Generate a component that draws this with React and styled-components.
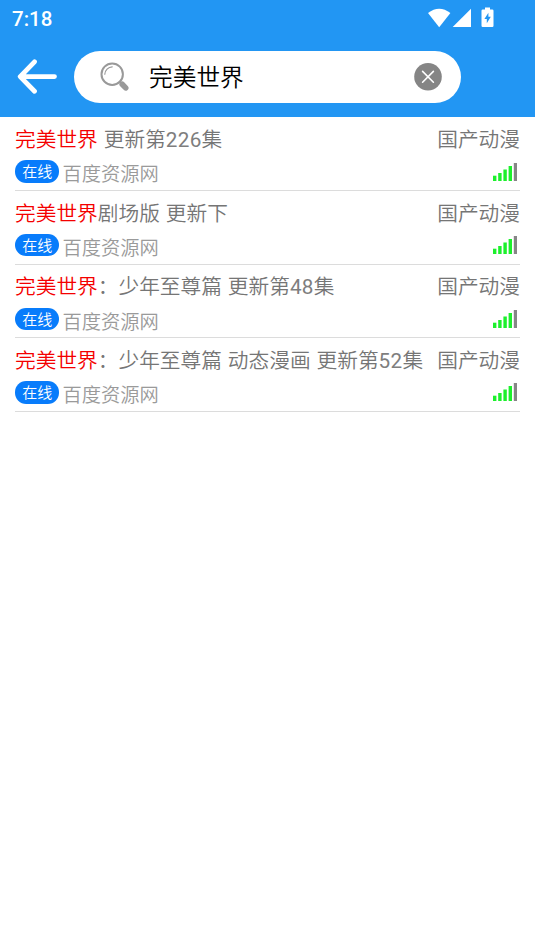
import styled, { createGlobalStyle } from 'styled-components';

const GlobalStyle = createGlobalStyle`
  * {
    box-sizing: border-box;
  }

  body {
    margin: 0;
    background-color: #ffffff;
    font-family: Roboto, 'Noto Sans CJK SC', sans-serif;
  }
`;

const Page = styled.div`
  min-height: 951px;
  background-color: #ffffff;
  overflow: hidden;
`;

// Styles for the header
const Header = styled.header`
  height: 117.4px;
  background-color: #2296f3;
`;

const StatusBar = styled.div`
  display: flex;
  justify-content: space-between;
  height: 38px;
  padding: 0 40px 0 12px;
`;

const Time = styled.span`
  font-size: 20.5px;
  font-weight: 500;
  line-height: 38px;
  color: #ffffff;
`;

const StatusIcons = styled.svg`
  display: block;
  width: 67px;
  height: 22px;
  margin-top: 7px;
`;

const SearchRow = styled.div`
  display: flex;
  align-items: center;
  height: 52px;
  margin-top: 12.6px;
  padding-left: 17px;
`;

const BackButton = styled.button`
  display: flex;
  width: 40px;
  height: 36px;
  padding: 0;
  border: none;
  background: none;
`;

const SearchBox = styled.div`
  display: flex;
  align-items: center;
  width: 387px;
  height: 52px;
  margin-left: 17px;
  padding: 0 19px 0 26px;
  border-radius: 26px;
  background-color: #ffffff;
`;

const SearchText = styled.span`
  flex: 1;
  margin-left: 19px;
  padding-top: 2px;
  font-size: 23.7px;
  font-weight: 350;
  line-height: 50px;
  color: #000000;
`;

const ClearButton = styled.button`
  display: flex;
  padding: 0;
  border: none;
  background: none;
`;

// Styles for the result list
const List = styled.ul`
  margin: 0;
  padding: 0 15px;
  list-style-type: none;
`;

const ListItem = styled.li`
  height: 73.6px;
  padding-top: 7.6px;
  border-bottom: 1px solid #dcdcdc;
`;

const Line = styled.div`
  display: flex;
  justify-content: space-between;
  white-space: nowrap;
`;

const Title = styled.span`
  font-size: 20.7px;
  font-weight: 350;
  line-height: 30px;
  word-spacing: 0.9px;
  color: #757575;
`;

const Keyword = styled.span`
  color: #f40000;
`;

const Episode = styled.span`
  font-weight: 400;
  letter-spacing: 0.3px;
  color: #7e7e7e;
`;

const Source = styled.div`
  display: flex;
  margin-top: 5.4px;
`;

const Badge = styled.span`
  width: 44.4px;
  height: 22.4px;
  border-radius: 11.2px;
  background-color: #087cfb;
  font-size: 15px;
  font-weight: 350;
  line-height: 24px;
  text-align: center;
  color: #ffffff;
`;

const SourceName = styled.span`
  margin: 3px 0 0 3px;
  font-size: 19.25px;
  font-weight: 350;
  line-height: 24px;
  color: #9a9a9a;
`;

const Signal = styled.svg`
  display: block;
  width: 24px;
  height: 18px;
  margin: 7.6px 3px 0 0;
`;

const keyword = '完美世界';

const results = [
  { rest: ' 更新第', episode: '226', end: '集', category: '国产动漫', source: '百度资源网' },
  { rest: '剧场版 更新下', category: '国产动漫', source: '百度资源网' },
  { rest: '：少年至尊篇 更新第', episode: '48', end: '集', category: '国产动漫', source: '百度资源网' },
  { rest: '：少年至尊篇 动态漫画 更新第', episode: '52', end: '集', category: '国产动漫', source: '百度资源网' },
];

const barHeights = [5.3, 8, 11.5, 15, 18];

export default function App() {
  return (
    <Page>
      <GlobalStyle />
      <Header>
        <StatusBar>
          <Time>7:18</Time>
          <StatusIcons viewBox="428 7 67 22" fill="#ffffff">
            <path d="M428 13.1 Q439.2 4.2 450.4 13.1 L439.2 27.2 Z" />
            <path d="M452.7 27 L471 8.8 V27 Z" />
            <path
              fillRule="evenodd"
              d="M485 7.5 h5 v2 h2.3 q1.2 0 1.2 1.2 v15.1 q0 1.2 -1.2 1.2 h-9.6 q-1.2 0 -1.2 -1.2 v-15.1 q0 -1.2 1.2 -1.2 h2.3 Z M488.4 12.8 l-4 6.2 h2.4 v4.2 l4 -6.4 h-2.4 Z"
            />
          </StatusIcons>
        </StatusBar>
        <SearchRow>
          <BackButton aria-label="返回">
            <svg width="40" height="36" viewBox="0 0 40 36" fill="none" stroke="#ffffff" strokeWidth="4.8" strokeLinecap="round" strokeLinejoin="round">
              <path d="M17.5 2.8 L3.2 17.6 L17.5 32.2 M3.8 17.6 H37.5" />
            </svg>
          </BackButton>
          <SearchBox>
            <svg width="30" height="30" viewBox="0 0 30 30" fill="none" stroke="#999999" strokeLinecap="round">
              <circle cx="12.2" cy="12.2" r="10.7" strokeWidth="2" />
              <path d="M4.8 12.2 A7.7 7.7 0 0 1 12.2 4.8" strokeWidth="1.2" />
              <path d="M19.8 19.8 L22 22" strokeWidth="2.2" />
              <path d="M22.2 22.3 L25.7 25.9" strokeWidth="5.6" />
            </svg>
            <SearchText>{keyword}</SearchText>
            <ClearButton aria-label="清除">
              <svg width="28" height="28" viewBox="0 0 28 28">
                <circle cx="14" cy="13.8" r="13.8" fill="#858585" />
                <path d="M8.6 8.4 L19.4 19.2 M19.4 8.4 L8.6 19.2" stroke="#ffffff" strokeWidth="1.6" strokeLinecap="round" />
              </svg>
            </ClearButton>
          </SearchBox>
        </SearchRow>
      </Header>

      <List>
        {results.map((item, index) => (
          <ListItem key={index}>
            <Line>
              <Title>
                <Keyword>{keyword}</Keyword>
                {item.rest}
                {item.episode && <Episode>{item.episode}</Episode>}
                {item.end}
              </Title>
              <Title>{item.category}</Title>
            </Line>
            <Line>
              <Source>
                <Badge>在线</Badge>
                <SourceName>{item.source}</SourceName>
              </Source>
              <Signal viewBox="0 0 24 18">
                {barHeights.map((height, i) => (
                  <rect
                    key={height}
                    x={i * 5.2}
                    y={18 - height}
                    width="3.4"
                    height={height}
                    fill={i < 4 ? '#1cf02c' : '#868686'}
                  />
                ))}
              </Signal>
            </Line>
          </ListItem>
        ))}
      </List>
    </Page>
  );
}
